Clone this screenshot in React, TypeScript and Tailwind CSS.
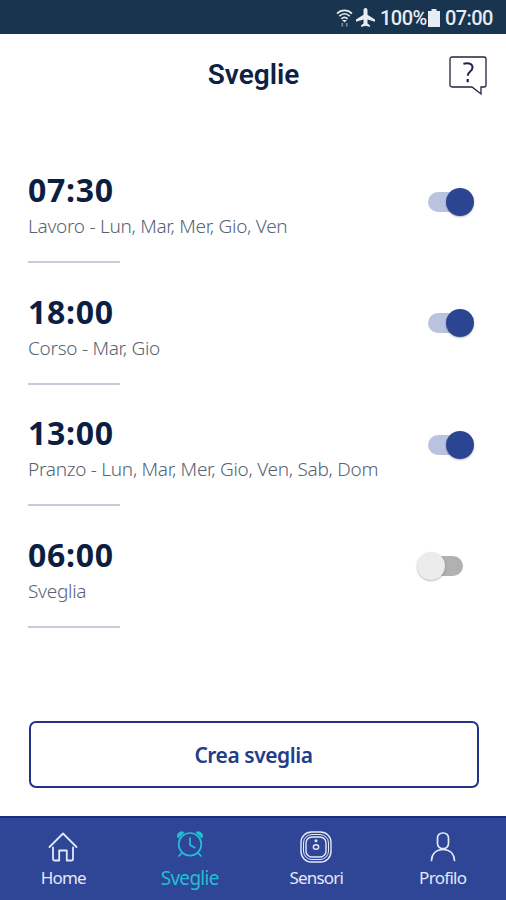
import React, { useState } from 'react';
import clsx from 'clsx';

interface Alarm {
  id: number;
  time: string;
  label: string;
  enabled: boolean;
}

const ALARMS: Alarm[] = [
  { id: 1, time: '07:30', label: 'Lavoro - Lun, Mar, Mer, Gio, Ven', enabled: true },
  { id: 2, time: '18:00', label: 'Corso - Mar, Gio', enabled: true },
  { id: 3, time: '13:00', label: 'Pranzo - Lun, Mar, Mer, Gio, Ven, Sab, Dom', enabled: true },
  { id: 4, time: '06:00', label: 'Sveglia', enabled: false },
];

const StatusBar: React.FC = () => (
  <div className="flex h-[34px] shrink-0 items-center justify-end bg-[#18344f] pr-[14px] pt-[2px] font-[Roboto,sans-serif] text-[20px] font-medium text-[#e6ecf1]">
    <svg width="17" height="18" viewBox="0 0 17 18" fill="none" stroke="currentColor" strokeWidth="1.6">
      <path d="M1 4.6C5.2.3 11.8.3 16 4.6M3.3 7.2c3.2-3 7.200-3 10.400 0M5.400 9.800c2-1.900 4.200-1.900 6.200 0" />
      <path d="M6 11h5l-2.500 2.400z" fill="currentColor" stroke="none" />
      <path d="M6.300 14v3.500M10.700 14v3.500" opacity=".5" />
    </svg>
    <svg width="19" height="19" viewBox="2.5 2 19 19" fill="currentColor" className="ml-[3px] -mt-px">
      <path d="M10 8.800V4a2 2 0 0 1 4 0v4.800l7.500 4.600v2.400L14 13.600v3.900l2.400 1.800V21L12 19.800 7.600 21v-1.700l2.400-1.800v-3.900l-7.500 2.200v-2.400z" />
    </svg>
    <span className="ml-[5px] w-[47px] whitespace-nowrap tracking-[-0.5px]">100%</span>
    <svg width="12" height="18" viewBox="0 0 12 18" fill="currentColor" className="ml-[1px]">
      <path d="M3.5 0h5v2H12v16H0V2h3.5z" />
    </svg>
    <span className="ml-[5px] w-[47px] whitespace-nowrap tracking-[-0.6px]">07:00</span>
  </div>
);

const HelpIcon: React.FC = () => (
  <svg width="40" height="42" viewBox="0 0 40 42" fill="none" stroke="#23233f" strokeWidth="1.3">
    <path d="M4 2h32a2 2 0 0 1 2 2v26a2 2 0 0 1-2 2h-3v7l-9-7H4a2 2 0 0 1-2-2V4a2 2 0 0 1 2-2z" />
    <path d="M15.4 8.8c6-1.3 9.3.4 9.1 4-.2 4-4.800 3.400-4.800 8" strokeWidth="2" stroke="#20204e" />
    <path d="M19.700 24v3.200" strokeWidth="2.200" stroke="#20204e" />
  </svg>
);

const Toggle: React.FC<{ on: boolean; onChange: () => void }> = ({ on, onChange }) => (
  <button
    role="switch"
    aria-checked={on}
    onClick={onChange}
    className={clsx('flex h-[28px] w-[46px] items-center', on ? 'justify-end' : 'mr-[11px] justify-start')}
  >
    <span className={clsx('h-[20px] w-[32px]', on ? 'rounded-l-full bg-[#b9c3df]' : 'order-2 -ml-[14px] rounded-r-full bg-[#b1b1b1]')} />
    <span
      className={clsx(
        'size-[28px] shrink-0 rounded-full shadow-[0_1px_2px_rgba(0,0,0,0.28)]',
        on ? '-ml-[14px] bg-[#2c4592]' : 'z-10 bg-[#ececec]'
      )}
    />
  </button>
);

const HomeIcon = () => (
  <svg width="30" height="30" viewBox="0 0 30 30" fill="none" stroke="currentColor" strokeWidth="1.8" strokeLinecap="round" strokeLinejoin="round">
    <path d="M1.5 15 15 1.5 28.5 15" />
    <path d="M5 15.5V27a1.5 1.5 0 0 0 1.5 1.5h4.700V18.500h7.600v10h4.700A1.500 1.500 0 0 0 25 27V15.500" />
  </svg>
);

const AlarmIcon = () => (
  <svg width="28" height="28" viewBox="0 0 28 28" fill="none" stroke="currentColor" strokeWidth="1.7" strokeLinecap="round">
    <circle cx="14" cy="14.300" r="11.300" />
    <path d="M14 8v7l4.800 2.700M6.200 22.700 3 26M21.800 22.700 25 26" />
    <path d="M2 7.800C-.2 4.500 3.600.4 8 2.400l-2.800 2.800zM26 7.800c2.200-3.300-1.600-7.400-6-5.400l2.800 2.800z" fill="currentColor" strokeWidth="1" />
  </svg>
);

const SensorIcon = () => (
  <svg width="32" height="32" viewBox="0 0 32 32" fill="none" stroke="currentColor" strokeWidth="1.4">
    <rect x="1" y="1" width="30" height="30" rx="10.500" />
    <rect x="3.500" y="3.500" width="25" height="25" rx="8.500" strokeWidth="1" />
    <rect x="6" y="6" width="20" height="20" rx="6" />
    <circle cx="16" cy="9.700" r="1.500" fill="currentColor" stroke="none" />
    <ellipse cx="16" cy="16" rx="2.700" ry="2.200" />
  </svg>
);

const ProfileIcon = () => (
  <svg width="26" height="30" viewBox="0 0 26 30" fill="none" stroke="currentColor" strokeWidth="1.7" strokeLinecap="round">
    <rect x="7.500" y="1" width="11" height="15.500" rx="5" />
    <path d="M1.500 28.500C2 21.500 6.500 17.500 13 17.500s11 4 11.500 11" />
  </svg>
);

const TABS = [
  { name: 'Home', icon: HomeIcon, iconClass: 'pt-[14px]', textClass: 'text-[17px] tracking-[-0.9px]' },
  { name: 'Sveglie', icon: AlarmIcon, iconClass: 'pt-[12px]', textClass: 'text-[19px] tracking-[-0.7px]' },
  { name: 'Sensori', icon: SensorIcon, iconClass: 'pt-[13px]', textClass: 'text-[17px] tracking-[-0.8px]' },
  { name: 'Profilo', icon: ProfileIcon, iconClass: 'pt-[14px]', textClass: 'text-[17px] tracking-[-0.7px]' },
];

export default function App() {
  const [alarms, setAlarms] = useState(ALARMS);
  const [tab, setTab] = useState('Sveglie');

  const toggleAlarm = (id: number) => {
    setAlarms((prev) => prev.map((a) => (a.id === id ? { ...a, enabled: !a.enabled } : a)));
  };

  return (
    <div className="flex h-[900px] w-[506px] flex-col overflow-hidden bg-white font-['Noto_Sans',sans-serif]">
      <StatusBar />

      <header className="grid h-[138px] shrink-0 grid-cols-[1fr_auto_1fr] items-start pl-[19px] pr-[18px] pt-[22px]">
        <h1 className="col-start-2 font-[Roboto,sans-serif] text-[28px] font-semibold leading-[37px] text-[#0e2045]">
          Sveglie
        </h1>
        <button className="-mt-px justify-self-end" aria-label="Aiuto">
          <HelpIcon />
        </button>
      </header>

      <ul className="shrink-0 pl-[28px] pr-[32px]">
        {alarms.map((alarm) => (
          <li key={alarm.id} className="flex h-[121.67px] justify-between">
            <div>
              <p className="text-[32px] font-bold leading-[36px] tracking-[0.7px] text-[#0c1f43]">{alarm.time}</p>
              <p className="mt-[6px] whitespace-nowrap text-[19px] font-light leading-[24px] tracking-[-0.28px] text-[#566374]">
                {alarm.label}
              </p>
              <div className="mt-[23px] h-[2px] w-[92px] bg-[#c6ccd8]" />
            </div>
            <div className="pt-[15.5px]">
              <Toggle on={alarm.enabled} onChange={() => toggleAlarm(alarm.id)} />
            </div>
          </li>
        ))}
      </ul>

      <div className="flex-1 pl-[28.5px] pr-[27.5px] pt-[62px]">
        <button className="h-[67px] w-full rounded-[7px] border-[2.5px] border-[#233387] pt-[3px] text-[21px] font-semibold tracking-[-0.45px] text-[#233d88]">
          Crea sveglia
        </button>
      </div>

      <nav className="grid h-[84px] shrink-0 grid-cols-4 border-t-2 border-[#192c83] bg-[#2f4595]">
        {TABS.map(({ name, icon: Icon, iconClass, textClass }) => (
          <button
            key={name}
            onClick={() => setTab(name)}
            className={clsx('flex flex-col items-center', tab === name ? 'text-[#22bfd2]' : 'text-[#e3e9f8]')}
          >
            <span className={clsx('h-[49px]', iconClass)}>
              <Icon />
            </span>
            <span className={clsx('leading-[22px]', textClass)}>{name}</span>
          </button>
        ))}
      </nav>
    </div>
  );
}
